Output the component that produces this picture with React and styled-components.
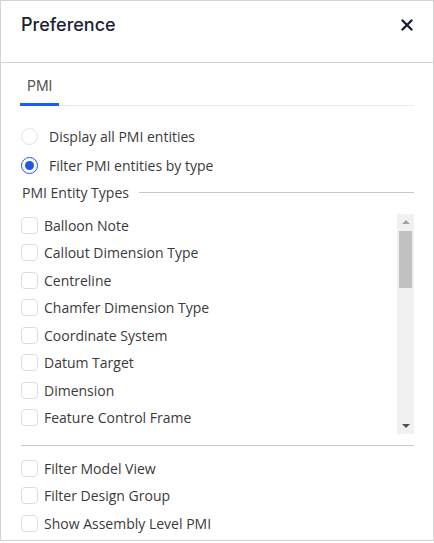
import React, { useState } from "react";
import styled, { createGlobalStyle } from "styled-components";

const Global = createGlobalStyle`
  html, body { margin: 0; padding: 0; background: #fff; }
  * { box-sizing: border-box; }
`;

const Panel = styled.div`
  width: 434px;
  height: 541px;
  border: 1px solid #d4d4d4;
  background: #fff;
  display: flex;
  flex-direction: column;
  overflow: hidden;
`;

const Header = styled.div`
  height: 62px;
  flex: none;
  display: flex;
  align-items: flex-start;
  justify-content: space-between;
  padding: 12px 19px 0 20px;
  border-bottom: 1px solid #d4d4d4;
`;

const Title = styled.h1`
  margin: 0;
  font-family: Inter, "Liberation Sans", sans-serif;
  font-size: 18px;
  font-weight: 500;
  line-height: 24px;
  color: #1b1f33;
`;

const CloseButton = styled.button`
  border: 0;
  background: none;
  padding: 0;
  margin-top: 5px;
  width: 14px;
  height: 14px;
  display: flex;
  align-items: center;
  justify-content: center;
  cursor: pointer;
`;

const Body = styled.div`
  padding: 0 19px 0 19px;
  display: flex;
  flex-direction: column;
`;

const TabBar = styled.div`
  display: flex;
  border-bottom: 1px solid #ebebeb;
  margin-top: 10px;
`;

const Tab = styled.div`
  font-family: Inter, "Liberation Sans", sans-serif;
  font-size: 14px;
  color: #555;
  padding: 3px 7px 7px 7px;
  margin-bottom: -1px;
  line-height: 20px;
  border-bottom: 3px solid ${(p) => (p.$active ? "#1a5cff" : "transparent")};
`;

const RadioGroup = styled.div`
  display: flex;
  flex-direction: column;
  gap: 7px;
  margin-top: 19px;
`;

const RadioRow = styled.label`
  display: flex;
  align-items: center;
  height: 22px;
  gap: 11px;
  font-family: "Open Sans", sans-serif;
  font-size: 14px;
  color: #3a3a3a;
  cursor: pointer;
`;

const RadioCircle = styled.span`
  width: 17px;
  height: 17px;
  border-radius: 50%;
  border: ${(p) => (p.$checked ? "1.5px solid #1f56f0" : "1px solid #e2e2e2")};
  display: flex;
  align-items: center;
  justify-content: center;
  flex: none;
  margin-left: 1px;
  &::after {
    content: "";
    width: 9px;
    height: 9px;
    border-radius: 50%;
    background: ${(p) => (p.$checked ? "#1f56f0" : "transparent")};
  }
`;

const SectionTitle = styled.div`
  display: flex;
  align-items: center;
  gap: 10px;
  margin-top: 5px;
  height: 22px;
  font-family: "Open Sans", sans-serif;
  font-size: 14px;
  color: #3a3a3a;
  padding-left: 2px;
  &::after {
    content: "";
    flex: 1;
    height: 1px;
    background: #c8c8c8;
  }
`;

const ListFrame = styled.div`
  margin-top: 11px;
  height: 220px;
  flex: none;
  display: flex;
`;

const ListViewport = styled.div`
  flex: 1;
  min-width: 0;
  overflow: hidden;
`;

const ScrollTrack = styled.div`
  width: 17px;
  flex: none;
  background: #f1f1f1;
  display: flex;
  flex-direction: column;
`;

const ArrowButton = styled.div`
  height: 17px;
  flex: none;
  display: flex;
  align-items: center;
  justify-content: center;
  &::before {
    content: "";
    width: 0;
    height: 0;
    border-left: 4px solid transparent;
    border-right: 4px solid transparent;
    ${(p) =>
      p.$dir === "up"
        ? `border-bottom: 4px solid ${p.$enabled ? "#505050" : "#a3a3a3"}; margin-top: -1px;`
        : `border-top: 4px solid ${p.$enabled ? "#505050" : "#a3a3a3"}; margin-top: 1px;`}
  }
`;

const Rail = styled.div`
  flex: 1;
  padding: 0 2px;
`;

const Thumb = styled.div`
  height: 57px;
  background: #c1c1c1;
`;

const CheckRow = styled.label`
  display: flex;
  align-items: center;
  height: 22px;
  margin-bottom: 5.5px;
  gap: 6px;
  font-family: "Open Sans", sans-serif;
  font-size: 14px;
  color: #3a3a3a;
  cursor: pointer;
  white-space: nowrap;
`;

const CheckBox = styled.span`
  width: 17px;
  height: 17px;
  border: 1px solid #dedede;
  border-radius: 4px;
  flex: none;
  margin-left: 1px;
`;

const Divider = styled.div`
  height: 1px;
  background: #c8c8c8;
  margin: 11px 0 11px 1px;
`;

const Options = styled.div`
  display: flex;
  flex-direction: column;
`;

const types = [
  "Balloon Note",
  "Callout Dimension Type",
  "Centreline",
  "Chamfer Dimension Type",
  "Coordinate System",
  "Datum Target",
  "Dimension",
  "Feature Control Frame",
];

const extras = ["Filter Model View", "Filter Design Group", "Show Assembly Level PMI"];

export default function App() {
  const [mode, setMode] = useState("filter");
  return (
    <>
      <Global />
      <Panel>
        <Header>
          <Title>Preference</Title>
          <CloseButton aria-label="Close">
            <svg width="12" height="12" viewBox="0 0 12 12">
              <path d="M1.5 1.5 L10.5 10.5 M10.5 1.5 L1.5 10.5" stroke="#1b1f33" strokeWidth="2.4" strokeLinecap="round" />
            </svg>
          </CloseButton>
        </Header>
        <Body>
          <TabBar>
            <Tab $active>PMI</Tab>
          </TabBar>
          <RadioGroup>
            <RadioRow onClick={() => setMode("all")}>
              <RadioCircle $checked={mode === "all"} />
              Display all PMI entities
            </RadioRow>
            <RadioRow onClick={() => setMode("filter")}>
              <RadioCircle $checked={mode === "filter"} />
              Filter PMI entities by type
            </RadioRow>
          </RadioGroup>
          <SectionTitle>PMI Entity Types</SectionTitle>
          <ListFrame>
            <ListViewport>
              {types.map((t) => (
                <CheckRow key={t}>
                  <CheckBox />
                  {t}
                </CheckRow>
              ))}
            </ListViewport>
            <ScrollTrack>
              <ArrowButton $dir="up" />
              <Rail>
                <Thumb />
              </Rail>
              <ArrowButton $dir="down" $enabled />
            </ScrollTrack>
          </ListFrame>
          <Divider />
          <Options>
            {extras.map((t) => (
              <CheckRow key={t}>
                <CheckBox />
                {t}
              </CheckRow>
            ))}
          </Options>
        </Body>
      </Panel>
    </>
  );
}
